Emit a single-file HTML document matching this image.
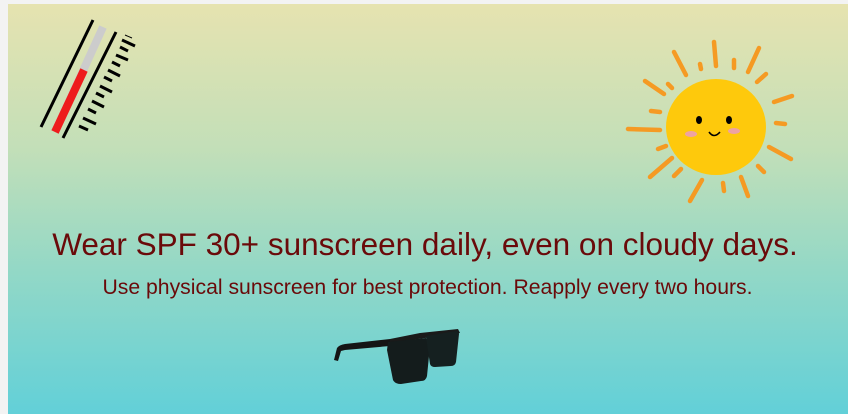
<!DOCTYPE html>
<html><head><style>
html,body{margin:0;padding:0;width:848px;height:414px;overflow:hidden;background:#f3f3f3;}
#box{position:absolute;left:8px;top:4px;width:840px;height:410px;background:linear-gradient(#e6e3b0 0%,#c3dfb8 35%,#93d8c6 65%,#62d0d8 100%);}
h1{position:absolute;left:0;width:850px;top:226px;margin:0;text-align:center;font:400 31.5px "Liberation Sans",sans-serif;color:#6a0a0a;white-space:nowrap;}
p{position:absolute;left:0;width:855px;top:276px;margin:0;text-align:center;font:400 21.2px "Liberation Sans",sans-serif;color:#6a0a0a;white-space:nowrap;}
svg{position:absolute;left:0;top:0}
</style></head><body>
<div id="box"></div>
<svg width="848" height="414">
<line x1="41" y1="127" x2="93" y2="20" stroke="#000" stroke-width="3"/>
<line x1="63" y1="138" x2="116" y2="32" stroke="#000" stroke-width="3"/>
<line x1="55" y1="132" x2="103" y2="27" stroke="#ccc" stroke-width="8"/>
<line x1="55" y1="132" x2="84" y2="70" stroke="#ee1c1c" stroke-width="8"/>
<g stroke="#000" stroke-width="3">
<line x1="79" y1="126" x2="88" y2="130"/><line x1="83" y1="118" x2="96" y2="124"/>
<line x1="88" y1="109" x2="96" y2="113"/><line x1="92" y1="101" x2="104" y2="107"/>
<line x1="96" y1="93" x2="104" y2="97"/><line x1="100" y1="86" x2="112" y2="92"/>
<line x1="104" y1="77" x2="112" y2="81"/><line x1="108" y1="70" x2="120" y2="76"/>
<line x1="112" y1="62" x2="120" y2="66"/><line x1="116" y1="55" x2="128" y2="60"/>
<line x1="120" y1="47" x2="128" y2="51"/><line x1="122" y1="40" x2="135" y2="46"/>
</g>
<line x1="125" y1="35" x2="132" y2="38" stroke="#000" stroke-width="1"/>
<g stroke="#f59a23" stroke-width="4.5" stroke-linecap="round">
<line x1="714" y1="42" x2="716" y2="66"/><line x1="734" y1="60" x2="734" y2="68"/>
<line x1="759" y1="48" x2="748" y2="72"/><line x1="766" y1="74" x2="757" y2="82"/>
<line x1="774" y1="102" x2="792" y2="96"/><line x1="776" y1="123" x2="785" y2="124"/>
<line x1="769" y1="147" x2="791" y2="159"/><line x1="758" y1="166" x2="764" y2="172"/>
<line x1="741" y1="177" x2="748" y2="196"/><line x1="723" y1="183" x2="724" y2="191"/>
<line x1="702" y1="180" x2="690" y2="201"/><line x1="681" y1="169" x2="674" y2="176"/>
<line x1="672" y1="158" x2="650" y2="177"/><line x1="666" y1="146" x2="658" y2="149"/>
<line x1="628" y1="129" x2="660" y2="130"/><line x1="651" y1="111" x2="660" y2="112"/>
<line x1="645" y1="81" x2="664" y2="94"/><line x1="668" y1="84" x2="672" y2="88"/>
<line x1="674" y1="52" x2="686" y2="75"/><line x1="700" y1="64" x2="701" y2="69"/>
</g>
<ellipse cx="716" cy="127" rx="50" ry="48" fill="#fec90c"/>
<ellipse cx="699" cy="120" rx="3" ry="4" fill="#000"/><ellipse cx="729" cy="120" rx="3" ry="4" fill="#000"/>
<ellipse cx="691" cy="134" rx="6" ry="3" fill="#eea3a3"/><ellipse cx="734" cy="131" rx="6" ry="3" fill="#eea3a3"/>
<path d="M709 132 q5 7 11 0" stroke="#000" stroke-width="1.6" fill="none"/>
<path d="M334 360 l3-12 q2-3 8-4 l45-5 l0 7 l-45 4 l-4 1 l-3 10 z" fill="#151515"/>
<path d="M390 339 l30-6 l38-4 l2 4 l-70 10 z" fill="#1a1a1a"/>
<path d="M388 342 l38-4 l4 8 l-3 30 q-1 5 -6 5 l-20 3 q-6 0 -8-4 l-6-30 z" fill="#141c1c"/>
<path d="M426 336 l30-5 q3 0 3 3 l-3 28 q-1 4 -5 4 l-16 1 q-4 0 -5-3 l-3-20 z" fill="#152020"/>
</svg>
<h1>Wear SPF 30+ sunscreen daily, even on cloudy days.</h1>
<p>Use physical sunscreen for best protection. Reapply every two hours.</p>
</body></html>
